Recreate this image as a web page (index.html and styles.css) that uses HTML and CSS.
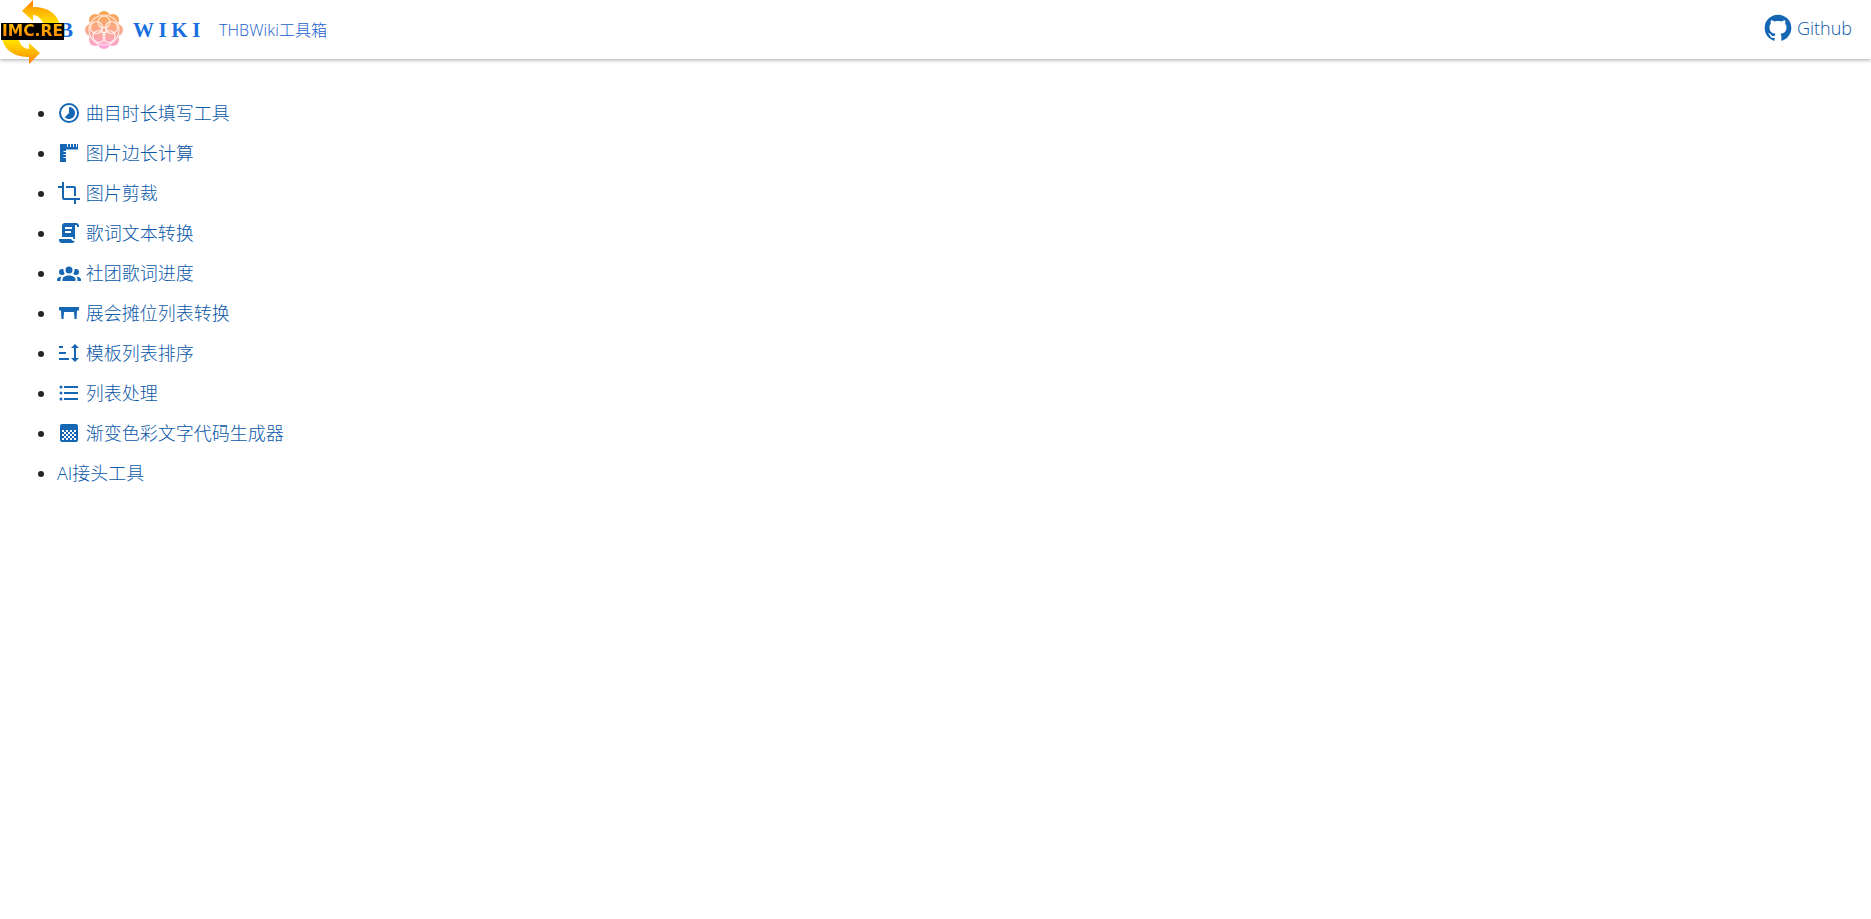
FILE: index.html
```html
<!DOCTYPE html>
<html lang="zh-CN">
<head>
<meta charset="utf-8">
<title>THBWiki工具箱</title>
<link rel="stylesheet" href="styles.css">
</head>
<body>
<header class="topbar">
  <a class="brand" href="#">
    <span class="brand-thb">THB</span>
    <svg class="flower" viewBox="0 0 40 40" aria-hidden="true">
      <defs>
        <linearGradient id="fl" gradientUnits="userSpaceOnUse" x1="0" y1="1" x2="0" y2="39">
          <stop offset="0" stop-color="#f8a44c"/>
          <stop offset=".5" stop-color="#fba88a"/>
          <stop offset="1" stop-color="#fda4dc"/>
        </linearGradient>
      </defs>
      <g fill="url(#fl)">
        <circle cx="20" cy="20" r="16"/>
        <circle cx="20" cy="7" r="6"/><circle cx="29" cy="10" r="6"/><circle cx="33" cy="20" r="6"/><circle cx="29" cy="30" r="6"/>
        <circle cx="20" cy="33" r="6"/><circle cx="11" cy="30" r="6"/><circle cx="7" cy="20" r="6"/><circle cx="11" cy="10" r="6"/>
      </g>
      <g fill="none" stroke="#fff" stroke-width="1.1" opacity=".8">
        <circle cx="20" cy="20" r="15"/>
        <circle cx="20" cy="12" r="6"/><circle cx="27.500" cy="17.500" r="6"/><circle cx="25" cy="26.500" r="6"/><circle cx="15" cy="26.500" r="6"/><circle cx="12.500" cy="17.500" r="6"/>
        <circle cx="20" cy="20" r="3"/>
      </g>
    </svg>
    <span class="brand-wiki">WIKI</span>
    <span class="brand-name">THBWiki工具箱</span>
  </a>
  <a class="gh" href="#">
    <svg class="gh-icon" viewBox="0 0 24 24" aria-hidden="true"><path d="M12,2A10,10 0 0,0 2,12C2,16.42 4.87,20.17 8.84,21.5C9.34,21.58 9.5,21.27 9.5,21V19.31C6.73,19.91 6.14,17.97 6.14,17.97C5.68,16.81 5.03,16.47 5.03,16.47C4.12,15.85 5.1,15.87 5.1,15.87C6.1,15.94 6.63,16.9 6.63,16.9C7.5,18.42 8.97,17.97 9.54,17.73C9.63,17.08 9.89,16.64 10.17,16.39C7.95,16.14 5.62,15.28 5.62,11.5C5.62,10.39 6,9.5 6.65,8.79C6.55,8.54 6.2,7.5 6.75,6.15C6.75,6.15 7.59,5.88 9.5,7.17C10.29,6.95 11.15,6.84 12,6.84C12.85,6.84 13.71,6.95 14.5,7.17C16.41,5.88 17.25,6.15 17.25,6.15C17.8,7.5 17.45,8.54 17.35,8.79C18,9.5 18.38,10.39 18.38,11.5C18.38,15.29 16.04,16.13 13.81,16.38C14.17,16.69 14.5,17.3 14.5,18.22V21C14.5,21.27 14.66,21.59 15.17,21.5C19.14,20.16 22,16.42 22,12A10,10 0 0,0 12,2Z"/></svg>
    <span>Github</span>
  </a>
</header>

<div class="imc">
  <svg class="imc-arrows" viewBox="0 0 64 64" aria-hidden="true">
    <defs>
      <linearGradient id="ar1" x1="0" y1="0" x2="0" y2="1">
        <stop offset="0" stop-color="#ff7a00"/>
        <stop offset=".4" stop-color="#ffb000"/>
        <stop offset="1" stop-color="#ffec00"/>
      </linearGradient>
    </defs>
    <path fill="url(#ar1)" d="M33,0L22,11L33,21V15C38,15 42,19 44,26H60C58,14 48,7 33,7Z"/>
    <path fill="url(#ar1)" transform="rotate(180 31 32)" d="M33,0L22,11L33,21V15C38,15 42,19 44,26H60C58,14 48,7 33,7Z"/>
  </svg>
  <div class="imc-label"><span class="imc-text">IMC.RE</span></div>
</div>

<main class="content">
  <ul class="tools">
    <li><a href="#"><svg class="ico" viewBox="0 0 24 24"><path d="M16.24,7.76C15.07,6.59 13.54,6 12,6V12L7.76,16.24C10.1,18.58 13.9,18.58 16.25,16.24C18.59,13.9 18.59,10.1 16.24,7.76M12,2A10,10 0 0,0 2,12A10,10 0 0,0 12,22A10,10 0 0,0 22,12A10,10 0 0,0 12,2M12,20A8,8 0 0,1 4,12A8,8 0 0,1 12,4A8,8 0 0,1 20,12A8,8 0 0,1 12,20Z"/></svg> 曲目时长填写工具</a></li>
    <li><a href="#"><svg class="ico" viewBox="0 0 24 24"><path fill-rule="evenodd" d="M3,3H21V8.500H9V21H3ZM10,3V6H11V3ZM13,3V6H14V3ZM16,3V6H17V3ZM19,3V6H20V3ZM6.500,10V11H9V10ZM6.500,13V14H9V13ZM6.500,16V17H9V16Z"/></svg> 图片边长计算</a></li>
    <li><a href="#"><svg class="ico" viewBox="0 0 24 24"><path d="M7,17V1H5V5H1V7H5V17A2,2 0 0,0 7,19H17V23H19V19H23V17M17,15H19V7C19,5.89 18.1,5 17,5H9V7H17V15Z"/></svg> 图片剪裁</a></li>
    <li><a href="#"><svg class="ico" viewBox="0 0 24 24"><path d="M17.8,20C17.4,21.2 16.3,22 15,22H5C3.3,22 2,20.7 2,19V18H5L14.2,18C14.6,19.2 15.7,20 17,20H17.8M19,2C20.7,2 22,3.3 22,5V6H20V5C20,4.4 19.6,4 19,4C18.4,4 18,4.4 18,5V18H17C16.4,18 16,17.6 16,17V16H5V5C5,3.3 6.3,2 8,2H19M8,6V8H15V6H8M8,10V12H14V10H8Z"/></svg> 歌词文本转换</a></li>
    <li><a href="#"><svg class="ico" viewBox="0 0 24 24"><path d="M12,5.5A3.5,3.5 0 0,1 15.5,9A3.5,3.5 0 0,1 12,12.5A3.5,3.5 0 0,1 8.5,9A3.5,3.5 0 0,1 12,5.5M5,8C5.56,8 6.08,8.15 6.53,8.42C6.38,9.85 6.8,11.27 7.66,12.38C7.16,13.34 6.16,14 5,14A3,3 0 0,1 2,11A3,3 0 0,1 5,8M19,8A3,3 0 0,1 22,11A3,3 0 0,1 19,14C17.84,14 16.84,13.34 16.34,12.38C17.2,11.27 17.62,9.85 17.47,8.42C17.92,8.15 18.44,8 19,8M5.5,18.25C5.5,16.18 8.41,14.5 12,14.5C15.59,14.5 18.5,16.18 18.5,18.25V20H5.5V18.25M0,20V18.5C0,17.11 1.89,15.94 4.45,15.6C3.86,16.28 3.5,17.22 3.5,18.25V20H0M24,20H20.5V18.25C20.5,17.22 20.14,16.28 19.55,15.6C22.11,15.94 24,17.11 24,18.5V20Z"/></svg> 社团歌词进度</a></li>
    <li><a href="#"><svg class="ico" viewBox="0 0 24 24"><path d="M2,6H22V9.500H20L19.500,18H17.500L17,11H7L6.500,18H4.500L4,9.500H2Z"/></svg> 展会摊位列表转换</a></li>
    <li><a href="#"><svg class="ico" viewBox="0 0 24 24"><path d="M18 21L14 17H17V7H14L18 3L22 7H19V17H22M2 19V17H12V19M2 13V11H9V13M2 7V5H6V7H2Z"/></svg> 模板列表排序</a></li>
    <li><a href="#"><svg class="ico" viewBox="0 0 24 24"><path d="M7,5H21V7H7V5M7,13V11H21V13H7M4,4.5A1.5,1.5 0 0,1 5.5,6A1.5,1.5 0 0,1 4,7.5A1.5,1.5 0 0,1 2.5,6A1.5,1.5 0 0,1 4,4.5M4,10.5A1.5,1.5 0 0,1 5.5,12A1.5,1.5 0 0,1 4,13.5A1.5,1.5 0 0,1 2.5,12A1.5,1.5 0 0,1 4,10.5M7,19V17H21V19H7M4,16.5A1.5,1.5 0 0,1 5.5,18A1.5,1.5 0 0,1 4,19.5A1.5,1.5 0 0,1 2.5,18A1.5,1.5 0 0,1 4,16.5Z"/></svg> 列表处理</a></li>
    <li><a href="#"><svg class="ico" viewBox="0 0 24 24"><path fill-rule="evenodd" d="M5,3H19A2,2 0 0,1 21,5V19A2,2 0 0,1 19,21H5A2,2 0 0,1 3,19V5A2,2 0 0,1 5,3ZM5,9h2v2H5ZM9,9h2v2H9ZM13,9h2v2H13ZM17,9h2v2H17ZM7,11h2v2H7ZM11,11h2v2H11ZM15,11h2v2H15ZM5,13h2v2H5ZM9,13h2v2H9ZM13,13h2v2H13ZM17,13h2v2H17ZM7,15h2v2H7ZM11,15h2v2H11ZM15,15h2v2H15ZM5,17h2v2H5ZM9,17h2v2H9ZM13,17h2v2H13ZM17,17h2v2H17Z"/></svg> 渐变色彩文字代码生成器</a></li>
    <li><a href="#">AI接头工具</a></li>
  </ul>
</main>
</body>
</html>
```

FILE: styles.css
```css
* { box-sizing: border-box; }

html, body { margin: 0; padding: 0; }

body {
  background: #fff;
  color: #212529;
  font-family: "Open Sans", "Noto Sans CJK SC", sans-serif;
  font-size: 18px;
  font-weight: 300;
  line-height: 24px;
  min-height: 919px;
  position: relative;
}

a { color: #0a58a8; text-decoration: none; }

.topbar {
  height: 59px;
  display: flex;
  align-items: center;
  justify-content: space-between;
  padding: 0 19px 0 17px;
  background: #fff;
  box-shadow: 0 1px 4px rgba(0, 0, 0, .35);
}

.brand { display: flex; align-items: center; }

.brand-thb, .brand-wiki {
  font-family: "Liberation Serif", serif;
  font-weight: 700;
  font-size: 21px;
  letter-spacing: 4.6px;
  color: #1a6fe0;
}

.brand-thb { width: 67px; padding-right: 9px; white-space: nowrap; text-align: right; letter-spacing: 2px; }

.flower { width: 40px; height: 40px; display: block; margin-right: 9px; }

.brand-wiki { width: 86px; }

.brand-name { font-size: 16px; color: #1a60cc; letter-spacing: .1px; }

.gh { display: flex; align-items: center; gap: 3px; font-size: 18px; margin-top: -4px; }

.gh-icon { width: 32px; height: 32px; fill: #1567b4; display: block; }

.imc { position: absolute; left: 0; top: 0; width: 64px; height: 64px; }

.imc-arrows { position: absolute; inset: 0; width: 64px; height: 64px; display: block; }

.imc-label {
  position: absolute;
  left: 1px;
  top: 23px;
  width: 63px;
  height: 17px;
  background: #000;
  font-family: "DejaVu Sans", sans-serif;
  font-weight: 700;
  font-size: 15.5px;
  line-height: 17px;
  text-align: center;
  white-space: nowrap;
}

.imc-text {
  background: linear-gradient(#ffc400, #ff7a00);
  -webkit-background-clip: text;
  background-clip: text;
  color: transparent;
}

.content { padding: 42px 17px 0; }

.tools { margin: 0; padding: 0 0 0 40px; }

.tools li { margin-bottom: 16px; height: 24px; }

.ico { width: 24px; height: 24px; fill: #1567b4; vertical-align: top; }
```
